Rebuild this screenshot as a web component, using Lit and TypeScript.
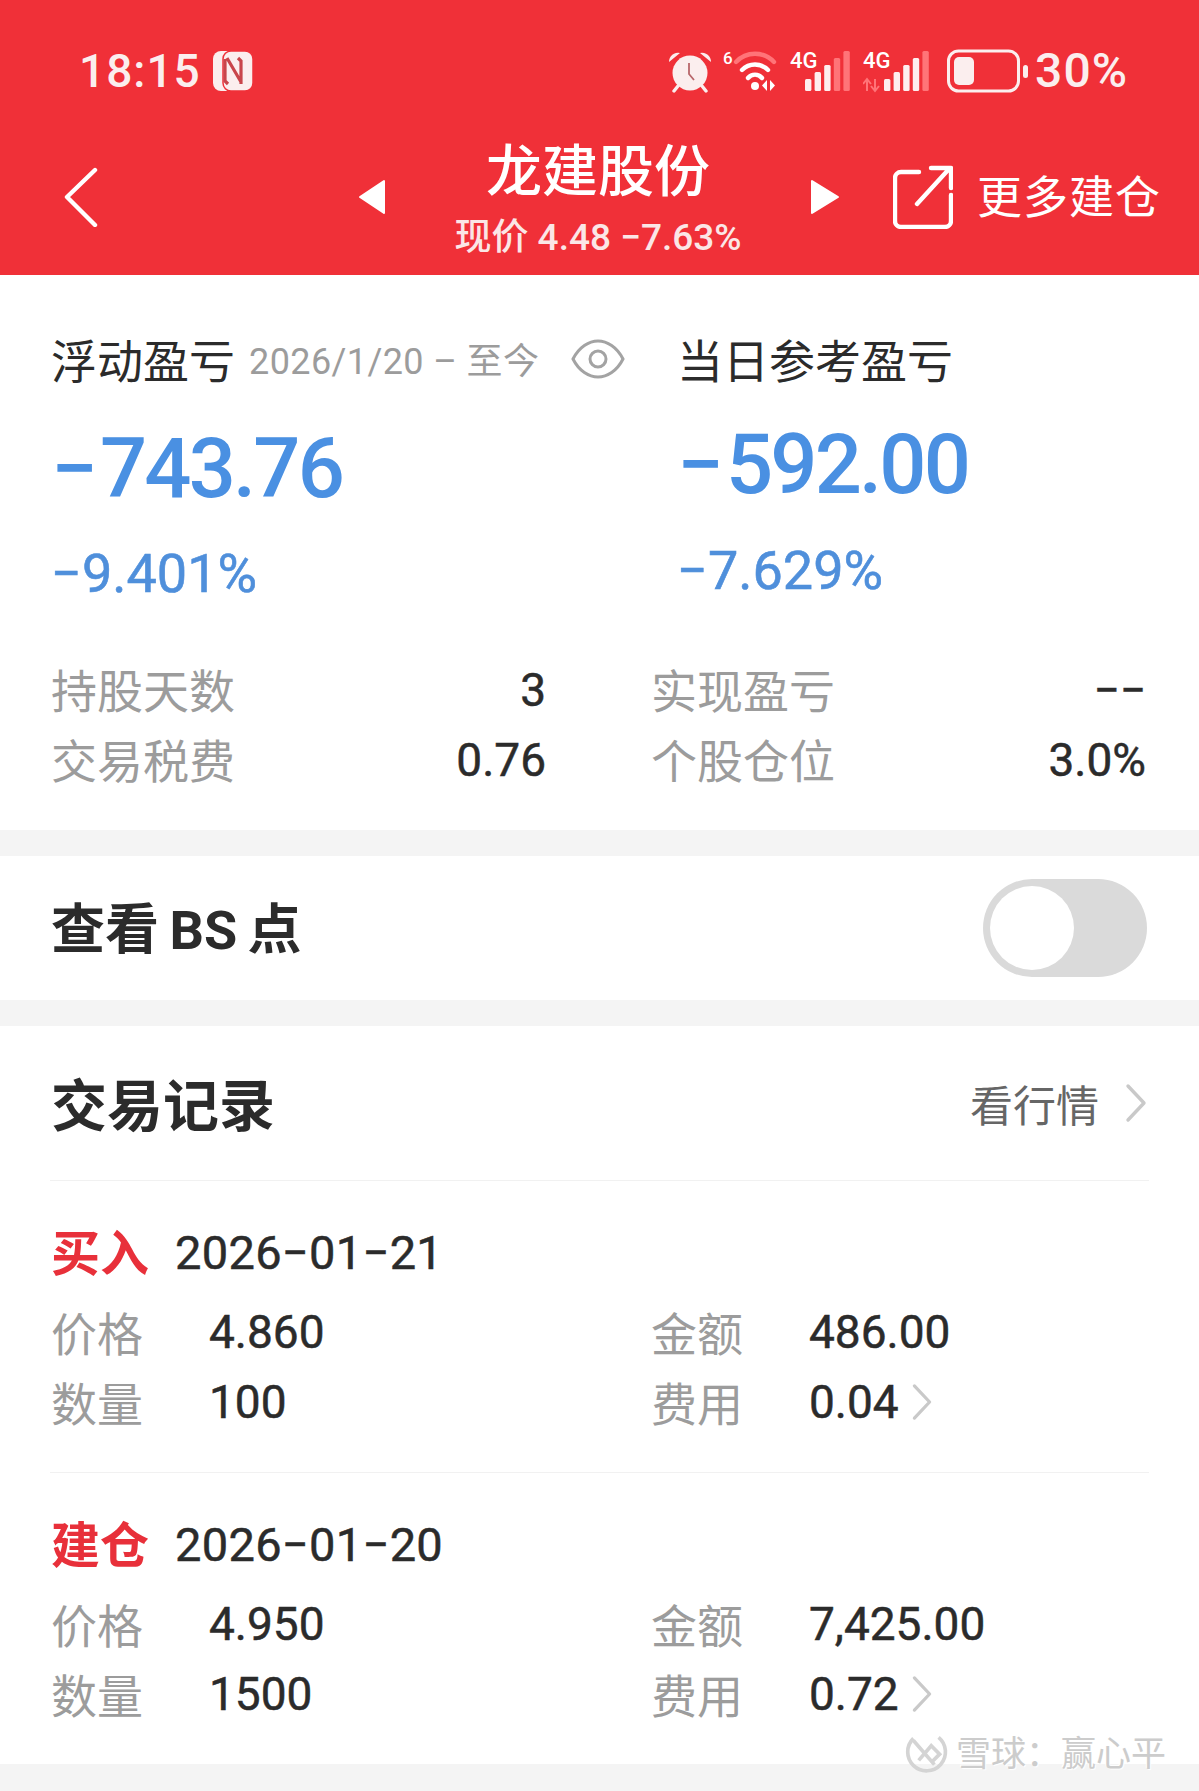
import { LitElement, html, css, svg } from "lit";
import { customElement } from "lit/decorators.js";

const trades = [
  { kind: "买入", date: "2026−01−21", price: "4.860", amount: "486.00", qty: "100", fee: "0.04" },
  { kind: "建仓", date: "2026−01−20", price: "4.950", amount: "7,425.00", qty: "1500", fee: "0.72" },
];

const bars = (x: number, on: number) =>
  [0, 1, 2, 3, 4].map((i) => {
    const h = 12 + i * 7;
    const lit = i < on;
    return svg`<rect x=${x + i * 9.6} y=${42 - h} width="6.4" height=${h} rx="1.5" fill=${lit ? "#fff" : "#ff7478"} opacity=${lit ? 0.92 : 1} />`;
  });

@customElement("app-root")
export class AppRoot extends LitElement {
  static styles = css`
    :host {
      display: block;
      position: relative;
      width: 100%;
      height: 1791px;
      overflow: hidden;
      background: #f4f4f4;
      color: #2b2b2b;
      font-family: Roboto, "Noto Sans CJK SC", sans-serif;
    }
    svg { display: block; flex: none; }
    .header { height: 275px; background: #f03038; color: #fff; overflow: hidden; }
    .status {
      display: flex; align-items: center; height: 46px; margin-top: 48px; padding: 0 71px 0 79px;
    }
    .time { font-size: 46px; font-weight: 500; letter-spacing: 1px; line-height: 46px; color: #fbeeee; }
    .nfc { margin-left: 12px; }
    .status-right { display: flex; align-items: center; margin-left: auto; }
    .pct { font-size: 48px; font-weight: 500; line-height: 46px; letter-spacing: 1px; margin-left: 4px; color: #fbeeee; }
    .nav {
      display: grid; grid-template-columns: 358px 28px 424px 30px 53px 60px 1fr;
      align-items: center; height: 130px; margin-top: 38px;
    }
    .back { margin-left: 64px; }
    .title-box { text-align: center; padding-top: 7px; }
    .title { font-size: 56px; line-height: 62px; font-weight: 500; }
    .sub { font-size: 37px; line-height: 44px; font-weight: 500; margin-top: 13px; color: #fbe6e6; }
    .more { font-size: 45px; line-height: 60px; padding-left: 24px; padding-top: 4px; white-space: nowrap; letter-spacing: 1px; }

    .panel { background: #fff; height: 555px; padding: 58px 52px 0 51px; box-sizing: border-box; }
    .gain-grid { display: grid; grid-template-columns: 626px 1fr; height: 269px; }
    .gain-head { display: flex; align-items: center; height: 50px; font-size: 46px; white-space: nowrap; }
    .range { font-size: 36px; color: #9c9c9c; margin-left: 14px; letter-spacing: 0.4px; }
    .eye { margin-left: 32px; margin-top: 2px; }
    .big { font-size: 83px; font-weight: 500; letter-spacing: -2.8px; line-height: 100px; color: #4a90e2; margin-top: 36px; }
    .minus { margin-right: 5px; }
    .rate {
      font-size: 54px; line-height: 60px; color: #4f8fdb; margin-top: 25px;
      -webkit-text-stroke: 0.6px #4f8fdb;
    }
    .shift .big { margin-top: 32px; }
    .shift .rate { margin-top: 26px; }
    .metrics { display: grid; grid-template-columns: 495px 495px; column-gap: 105px; margin-top: 53px; }
    .metric { display: flex; justify-content: space-between; height: 70px; line-height: 70px; }
    .metric span:first-child { font-size: 46px; color: #9c9c9c; line-height: 75px; }
    .metric span:last-child { font-size: 46px; color: #2b2b2b; -webkit-text-stroke: 0.5px #2b2b2b; }

    .bs {
      display: flex; align-items: center; justify-content: space-between; height: 144px;
      margin-top: 26px; padding: 0 52px 0 51px; background: #fff;
    }
    .bs-title { font-size: 54px; font-weight: 700; margin-top: -6px; word-spacing: -3px; }
    .toggle {
      width: 164px; height: 98px; border-radius: 49px; background: #dadada; margin-right: 0;
      display: flex; align-items: center; padding-left: 7px; box-sizing: border-box;
    }
    .knob { width: 84px; height: 84px; border-radius: 50%; background: #fff; }

    .records { margin-top: 26px; height: 738px; padding: 0 50px; background: #fff; box-sizing: border-box; }
    .rec-head {
      display: flex; align-items: center; justify-content: space-between; height: 154px;
      padding: 0 2px 0 1px; border-bottom: 1px solid #f1f1f1;
    }
    .rec-title { font-size: 56px; font-weight: 700; margin-top: -4px; }
    .rec-link { display: flex; align-items: center; gap: 26px; font-size: 43px; color: #666; }
    .trade { padding: 36px 2px 35px 1px; }
    .trade + .trade { border-top: 1px solid #f1f1f1; }
    .trade-head { display: flex; align-items: center; height: 70px; margin-bottom: 10px; }
    .kind { font-size: 49px; font-weight: 700; color: #e8303a; width: 124px; margin-top: -6px; }
    .date { font-size: 47px; letter-spacing: 0.3px; -webkit-text-stroke: 0.5px #2b2b2b; }
    .rows { display: grid; grid-template-columns: 600px 1fr; }
    .cell { display: flex; align-items: center; height: 70px; }
    .cell .k { font-size: 46px; color: #9c9c9c; width: 158px; margin-top: -3px; }
    .cell .v { font-size: 46px; -webkit-text-stroke: 0.5px #2b2b2b; }
    .cell svg { margin-left: 12px; }

    .mark {
      position: absolute; left: 904px; top: 1725px; display: flex; align-items: center; gap: 8px;
      font-size: 35px; color: #cccccc; white-space: nowrap;
      text-shadow: 1px 1px 1px #fff, -1px -1px 1px #fff;
    }
  `;

  private chevron(w: number, h: number, color: string) {
    return html`<svg width=${w} height=${h} viewBox="0 0 22 40" fill="none" stroke=${color} stroke-width="3.4" stroke-linecap="round" stroke-linejoin="round"><path d="M3 3l16 17L3 37" /></svg>`;
  }

  private statusIcons() {
    return html`
      <svg width="46" height="44" viewBox="0 0 46 44">
        <circle cx="23" cy="24" r="17.500" fill="#fbeeee" />
        <path d="M2 13a9 9 0 0 1 11-9zM44 13a9 9 0 0 0-11-9z" fill="#fbeeee" />
        <path d="M11 37l-4 5M35 37l4 5" stroke="#fbeeee" stroke-width="3.4" stroke-linecap="round" />
        <path d="M22 14v11l5 6" fill="none" stroke="#b8666a" stroke-width="1.800" />
      </svg>
      <svg width="56" height="44" viewBox="0 0 56 44" style="margin-left:10px">
        <text x="0" y="15" font-size="17" font-weight="500" fill="#fff">6</text>
        <path d="M13 13a26 26 0 0 1 38 0" fill="none" stroke="#ff7478" stroke-width="4.4" stroke-linecap="round" />
        <path d="M19 21a18 18 0 0 1 26 0M25 29a9 9 0 0 1 14 0" fill="none" stroke="#fff" stroke-width="4.4" stroke-linecap="round" />
        <circle cx="32" cy="37" r="4" fill="#fff" /><path d="M44 31v11l-5-5.500zM47 31v11l5-5.500z" fill="#fff" />
      </svg>
      <svg width="62" height="44" viewBox="0 0 62 44" style="margin-left:11px">
        <text x="0" y="19" font-size="22" font-weight="500" fill="#fff">4G</text>
        ${bars(15, 3)}
      </svg>
      <svg width="68" height="44" viewBox="0 0 68 44" style="margin-left:11px">
        <text x="0" y="19" font-size="22" font-weight="500" fill="#fff">4G</text>
        <path d="M4 30v12M0 35l4-5 4 5M12 30v12M8 37l4 5 4-5" fill="none" stroke="#ff7478" stroke-width="2" />
        ${bars(21, 4)}
      </svg>
      <svg width="84" height="44" viewBox="0 0 84 44" style="margin-left:16px">
        <rect x="1.500" y="2" width="70" height="40" rx="10" fill="none" stroke="#fbeeee" stroke-width="3" />
        <rect x="7" y="8" width="20" height="28" rx="5" fill="#fbeeee" />
        <rect x="76" y="16" width="5" height="13" rx="2.500" fill="#fbeeee" />
      </svg>`;
  }

  render() {
    return html`
      <div class="header">
        <div class="status">
          <span class="time">18:15</span>
          <svg class="nfc" width="40" height="42" viewBox="0 0 40 42">
            <rect x="0" y="1" width="30" height="40" rx="8" fill="#fbeeee" />
            <rect x="10" y="1" width="30" height="40" rx="8" fill="#fbeeee" stroke="#f03038" stroke-width="1.500" />
            <path d="M12 9v22l3 3M14 8l14 24M28 34V11l-3-3" fill="none" stroke="#c9454b" stroke-width="3.200" />
          </svg>
          <div class="status-right">${this.statusIcons()}<span class="pct">30%</span></div>
        </div>
        <div class="nav">
          <svg class="back" width="34" height="60" viewBox="0 0 34 60" fill="none" stroke="#fff" stroke-width="4.400" stroke-linecap="round" stroke-linejoin="round"><path d="M31 3L3 30l28 28" /></svg>
          <svg width="28" height="36" viewBox="0 0 28 36"><path d="M26 2v32L2 18z" fill="#fff" stroke="#fff" stroke-width="2" stroke-linejoin="round" /></svg>
          <div class="title-box">
            <div class="title">龙建股份</div>
            <div class="sub">现价 4.48 −7.63%</div>
          </div>
          <svg width="30" height="36" viewBox="0 0 30 36"><path d="M2 2v32l26-16z" fill="#fff" stroke="#fff" stroke-width="2" stroke-linejoin="round" /></svg>
          <span></span>
          <svg width="60" height="64" viewBox="0 0 60 64" fill="none" stroke="#fff" stroke-width="4.400" stroke-linecap="round" stroke-linejoin="round"><path d="M26 7H8a6 6 0 0 0-6 6v43a6 6 0 0 0 6 6h44a6 6 0 0 0 6-6V30" /><path d="M24 39L56 4M38 3h20v20" /></svg>
          <div class="more">更多建仓</div>
        </div>
      </div>

      <div class="panel">
        <div class="gain-grid">
          <div>
            <div class="gain-head">
              <span>浮动盈亏</span><span class="range">2026/1/20 – 至今</span>
              <svg class="eye" width="54" height="40" viewBox="0 0 54 40" fill="none" stroke="#a3a3a3" stroke-width="3"><path d="M2 20C8 8 18 2 27 2s19 6 25 18c-6 12-16 18-25 18S8 32 2 20z" /><circle cx="27" cy="20" r="8" /></svg>
            </div>
            <div class="big"><span class="minus">−</span>743.76</div>
            <div class="rate">−9.401%</div>
          </div>
          <div class="shift">
            <div class="gain-head">当日参考盈亏</div>
            <div class="big"><span class="minus">−</span>592.00</div>
            <div class="rate">−7.629%</div>
          </div>
        </div>
        <div class="metrics">
          <div class="metric"><span>持股天数</span><span>3</span></div>
          <div class="metric"><span>实现盈亏</span><span>−−</span></div>
          <div class="metric"><span>交易税费</span><span>0.76</span></div>
          <div class="metric"><span>个股仓位</span><span>3.0%</span></div>
        </div>
      </div>

      <div class="bs">
        <div class="bs-title">查看 BS 点</div>
        <div class="toggle"><div class="knob"></div></div>
      </div>

      <div class="records">
        <div class="rec-head">
          <div class="rec-title">交易记录</div>
          <div class="rec-link">看行情 ${this.chevron(22, 40, "#c9c9c9")}</div>
        </div>
        ${trades.map(
          (t) => html`
            <div class="trade">
              <div class="trade-head"><span class="kind">${t.kind}</span><span class="date">${t.date}</span></div>
              <div class="rows">
                <div class="cell"><span class="k">价格</span><span class="v">${t.price}</span></div>
                <div class="cell"><span class="k">金额</span><span class="v">${t.amount}</span></div>
                <div class="cell"><span class="k">数量</span><span class="v">${t.qty}</span></div>
                <div class="cell"><span class="k">费用</span><span class="v">${t.fee}</span>${this.chevron(22, 38, "#c9c9c9")}</div>
              </div>
            </div>
          `
        )}
      </div>

      <div class="mark">
        <svg width="44" height="44" viewBox="0 0 42 42" fill="none" stroke="#d4d4d4" stroke-width="3.500"><path d="M33 8a18 18 0 1 1-24 1" /><path d="M9 11l20 23M14 30l12-14 8 8-7 7" /></svg>
        <span>雪球：赢心平</span>
      </div>
    `;
  }
}
